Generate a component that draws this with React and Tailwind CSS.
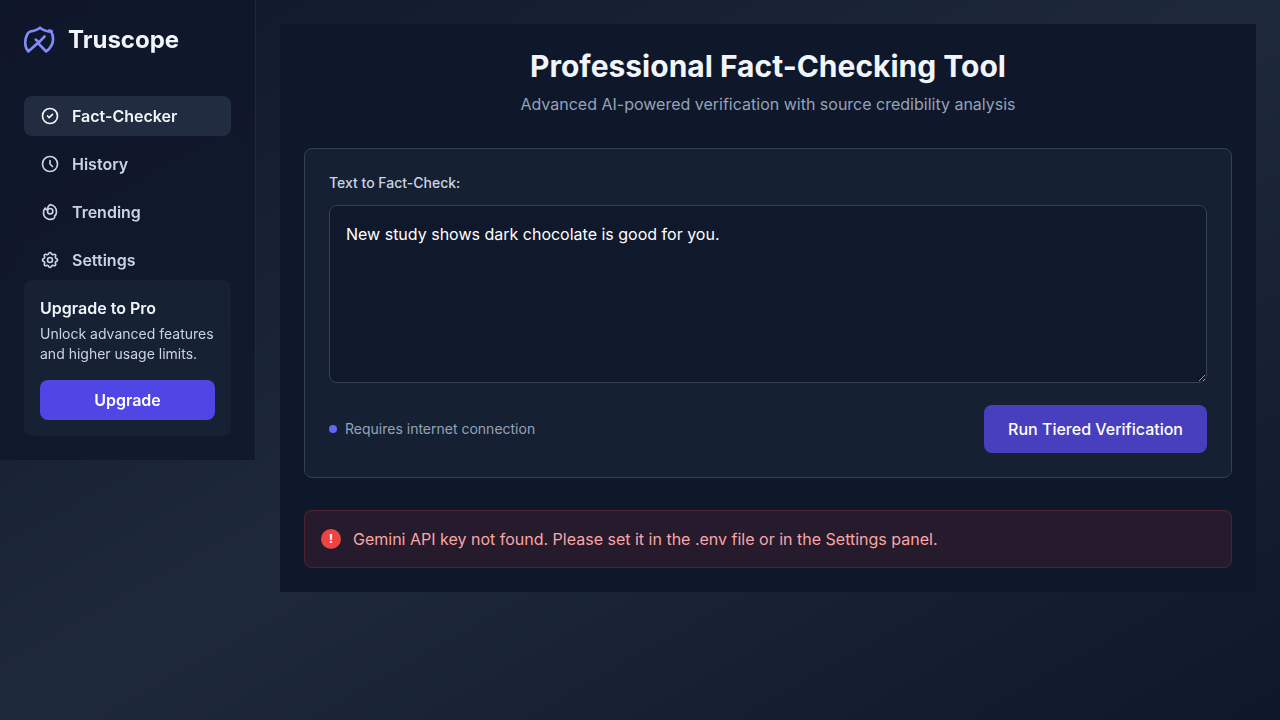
import React, { useState } from "react";

function Icon({ children, className = "size-5", strokeWidth = 2 }) {
  return (
    <svg
      aria-hidden="true"
      viewBox="0 0 24 24"
      fill="none"
      stroke="currentColor"
      strokeWidth={strokeWidth}
      strokeLinecap="round"
      strokeLinejoin="round"
      className={className}
    >
      {children}
    </svg>
  );
}

const navItems = [
  {
    label: "Fact-Checker",
    icon: <path d="M9 12l2 2 4-4m6 2a9 9 0 11-18 0 9 9 0 0118 0z" />,
  },
  {
    label: "History",
    icon: <path d="M12 8v4l3 3m6-3a9 9 0 11-18 0 9 9 0 0118 0z" />,
  },
  {
    label: "Trending",
    icon: (
      <>
        <path d="M9 9.6C9 6.5 9.8 4.2 12.4 3.2C16.8 3.8 19.8 7.6 19.8 12C19.8 14 19.2 15.4 17.6 16.8C17.8 18 17.4 19 16.6 19.8C14.6 20.8 12.4 21.2 10 20.6C6.4 19.6 4.2 16.6 4.2 13C4.2 10.6 4.8 8.6 6.2 7.2C6.6 8.6 7.6 9.4 9 9.6z" />
        <path d="M12.2 14.2a3.2 3.2 0 100-6.4 3.2 3.2 0 000 6.4z" />
      </>
    ),
  },
  {
    label: "Settings",
    icon: (
      <>
        <path d="M10.325 4.317c.426-1.756 2.924-1.756 3.35 0a1.724 1.724 0 002.573 1.066c1.543-.94 3.31.826 2.37 2.37a1.724 1.724 0 001.065 2.572c1.756.426 1.756 2.924 0 3.35a1.724 1.724 0 00-1.066 2.573c.94 1.543-.826 3.31-2.37 2.37a1.724 1.724 0 00-2.572 1.065c-.426 1.756-2.924 1.756-3.35 0a1.724 1.724 0 00-2.573-1.066c-1.543.94-3.31-.826-2.37-2.37a1.724 1.724 0 00-1.065-2.572c-1.756-.426-1.756-2.924 0-3.35a1.724 1.724 0 001.066-2.573c-.94-1.543.826-3.31 2.37-2.37.996.608 2.296.07 2.572-1.065z" />
        <path d="M15 12a3 3 0 11-6 0 3 3 0 016 0z" />
      </>
    ),
  },
];

function Sidebar() {
  return (
    <aside className="w-64 shrink-0 border-r border-[#1e293b] bg-[#0f172a]/80 p-6 backdrop-blur-sm">
      <div className="mb-10 flex items-center gap-3">
        <Icon className="size-8 text-[#818cf8]">
          <path d="M12 2.7C9.8 4.8 7.2 5.2 4.8 5.6C3 5.8 0.9 10 0.9 14C0.9 17 1.8 19 3.2 20.6L10.4 14.2L16.6 20.6C19.8 18.2 21.8 15 21.8 11.2C21.8 9 21.4 7.4 20.4 5.9C17 5.6 14.2 4.8 12 2.7z" />
          <path d="M8.9 11.8L11.2 13.8L15.4 9.4M19 4.8L20.8 5.4" />
        </Icon>
        <span className="text-2xl font-bold text-[#f1f5f9]">Truscope</span>
      </div>
      <nav className="flex flex-col gap-2">
        {navItems.map((item, index) => (
          <a
            key={item.label}
            href="#"
            aria-current={index === 0 ? "page" : undefined}
            className={
              index === 0
                ? "flex items-center gap-3 rounded-lg bg-[#334155]/50 px-4 py-2 font-semibold text-[#f1f5f9]"
                : "flex items-center gap-3 rounded-lg px-4 py-2 font-semibold text-[#cbd5e1]"
            }
          >
            <Icon>{item.icon}</Icon>
            {item.label}
          </a>
        ))}
      </nav>
      <section className="rounded-lg bg-[#1e293b]/50 p-4">
        <h2 className="font-semibold text-[#f1f5f9]">Upgrade to Pro</h2>
        <p className="mt-1 text-sm text-[#cbd5e1]">
          Unlock advanced features and higher usage limits.
        </p>
        <button
          type="button"
          className="mt-4 w-full rounded-lg bg-[#4f46e5] py-2 font-semibold text-white"
        >
          Upgrade
        </button>
      </section>
    </aside>
  );
}

export default function App() {
  const [text, setText] = useState("New study shows dark chocolate is good for you.");

  return (
    <div className="flex min-h-screen items-start bg-linear-to-br/srgb from-[#0f172a] via-[#1e293b] to-[#0f172a] font-['Inter',sans-serif] text-[#f1f5f9]">
      <Sidebar />
      <div className="min-w-0 flex-1 p-6">
        <main className="bg-[#0f172a] p-6">
          <header className="mb-8 text-center">
            <h1 className="mb-2 text-3xl font-bold text-[#f1f5f9]">
              Professional Fact-Checking Tool
            </h1>
            <p className="text-[#94a3b8]">
              Advanced AI-powered verification with source credibility analysis
            </p>
          </header>
          <form
            onSubmit={(event) => event.preventDefault()}
            className="rounded-lg border border-[#334155] bg-[#1e293b]/50 p-6"
          >
            <label
              htmlFor="claim"
              className="mb-3 block text-sm font-medium text-[#cbd5e1]"
            >
              Text to Fact-Check:
            </label>
            <div>
              <textarea
                id="claim"
                rows={6}
                value={text}
                onChange={(event) => setText(event.target.value)}
                className="w-full rounded-lg border border-[#334155] bg-[#0f172a]/80 p-4 text-white"
              />
            </div>
            <div className="mt-4 flex items-center justify-between gap-4">
              <div className="flex items-center gap-2 text-sm text-[#94a3b8]">
                <span className="size-2 rounded-full bg-[#6366f1]" />
                Requires internet connection
              </div>
              <button
                type="submit"
                className="rounded-lg bg-[#473fbd] px-6 py-3 font-medium text-white"
              >
                Run Tiered Verification
              </button>
            </div>
          </form>
          <div
            role="alert"
            className="mt-8 flex items-center gap-3 rounded-lg border border-[#ef4444]/20 bg-[#ef4444]/10 p-4 text-[#fca5a5]"
          >
            <span className="flex size-5 shrink-0 items-center justify-center rounded-full bg-[#ef4444] text-xs font-bold text-white">
              !
            </span>
            <p>
              Gemini API key not found. Please set it in the .env file or in the
              Settings panel.
            </p>
          </div>
        </main>
      </div>
    </div>
  );
}
